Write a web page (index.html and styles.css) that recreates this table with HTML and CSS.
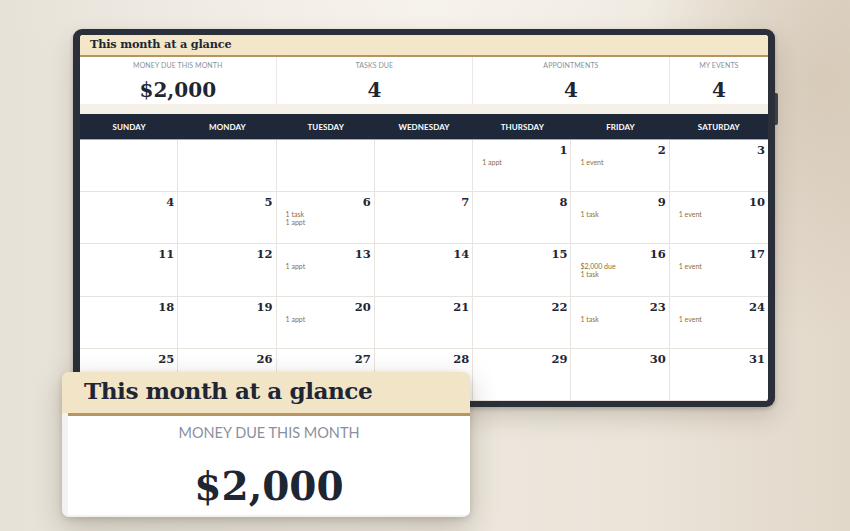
FILE: index.html
```html
<!DOCTYPE html>
<html>
<head>
<meta charset="utf-8">
<link rel="stylesheet" href="styles.css">
</head>
<body>
<div class="scene">
  <div class="device">
    <div class="screen">
      <div class="glance-head">This month at a glance</div>
      <div class="stats">
        <div class="stat wide"><div class="stat-label">MONEY DUE THIS MONTH</div><div class="stat-value">$2,000</div></div>
        <div class="stat wide"><div class="stat-label">TASKS DUE</div><div class="stat-value">4</div></div>
        <div class="stat wide"><div class="stat-label">APPOINTMENTS</div><div class="stat-value">4</div></div>
        <div class="stat"><div class="stat-label">MY EVENTS</div><div class="stat-value">4</div></div>
      </div>
      <div class="gap"></div>
      <div class="dow">
        <div>SUNDAY</div><div>MONDAY</div><div>TUESDAY</div><div>WEDNESDAY</div><div>THURSDAY</div><div>FRIDAY</div><div>SATURDAY</div>
      </div>
      <div class="grid">
        <div class="cell"></div>
        <div class="cell"></div>
        <div class="cell"></div>
        <div class="cell"></div>
        <div class="cell"><div class="num">1</div><div class="ev">1 appt</div></div>
        <div class="cell"><div class="num">2</div><div class="ev">1 event</div></div>
        <div class="cell"><div class="num">3</div></div>

        <div class="cell"><div class="num">4</div></div>
        <div class="cell"><div class="num">5</div></div>
        <div class="cell"><div class="num">6</div><div class="ev">1 task<br>1 appt</div></div>
        <div class="cell"><div class="num">7</div></div>
        <div class="cell"><div class="num">8</div></div>
        <div class="cell"><div class="num">9</div><div class="ev">1 task</div></div>
        <div class="cell"><div class="num">10</div><div class="ev">1 event</div></div>

        <div class="cell"><div class="num">11</div></div>
        <div class="cell"><div class="num">12</div></div>
        <div class="cell"><div class="num">13</div><div class="ev">1 appt</div></div>
        <div class="cell"><div class="num">14</div></div>
        <div class="cell"><div class="num">15</div></div>
        <div class="cell"><div class="num">16</div><div class="ev">$2,000 due<br>1 task</div></div>
        <div class="cell"><div class="num">17</div><div class="ev">1 event</div></div>

        <div class="cell"><div class="num">18</div></div>
        <div class="cell"><div class="num">19</div></div>
        <div class="cell"><div class="num">20</div><div class="ev">1 appt</div></div>
        <div class="cell"><div class="num">21</div></div>
        <div class="cell"><div class="num">22</div></div>
        <div class="cell"><div class="num">23</div><div class="ev">1 task</div></div>
        <div class="cell"><div class="num">24</div><div class="ev">1 event</div></div>

        <div class="cell"><div class="num">25</div></div>
        <div class="cell"><div class="num">26</div></div>
        <div class="cell"><div class="num">27</div></div>
        <div class="cell"><div class="num">28</div></div>
        <div class="cell"><div class="num">29</div></div>
        <div class="cell"><div class="num">30</div></div>
        <div class="cell"><div class="num">31</div></div>
      </div>
    </div>
    <div class="side-btn"></div>
  </div>

  <div class="zoom-card">
    <div class="zc-head">This month at a glance</div>
    <div class="zc-body">
      <div class="zc-label">MONEY DUE THIS MONTH</div>
      <div class="zc-value">$2,000</div>
    </div>
  </div>
</div>
</body>
</html>
```
FILE: styles.css
```css
* { box-sizing: border-box; }
html, body { margin: 0; padding: 0; }
body {
  width: 850px;
  height: 531px;
  overflow: hidden;
  font-family: "Lato", "Liberation Sans", sans-serif;
  background:
    radial-gradient(ellipse 180px 260px at 820px 80px, rgba(205,190,170,0.55), rgba(205,190,170,0) 100%),
    radial-gradient(ellipse 420px 160px at 430px 10px, rgba(248,244,238,0.9), rgba(248,244,238,0) 100%),
    linear-gradient(90deg, #e7e2d8 0%, #ede8df 40%, #ebe4d9 75%, #e2d8ca 100%);
}
.scene {
  position: relative;
  width: 850px;
  height: 531px;
  padding: 29px 0 0 73px;
}
.device {
  position: relative;
  width: 702px;
  height: 378px;
  background: #2a2f39;
  border-radius: 9px;
  padding: 6px 7px;
  box-shadow: 0 10px 24px rgba(60,45,25,0.18), 0 2px 4px rgba(0,0,0,0.2);
}
.side-btn {
  position: absolute;
  right: -3px;
  top: 64px;
  width: 3px;
  height: 32px;
  background: #3a3f48;
  border-radius: 0 2px 2px 0;
}
.screen {
  width: 688px;
  height: 366px;
  background: #fff;
  border-radius: 3px;
  overflow: hidden;
  display: flex;
  flex-direction: column;
}
.glance-head {
  height: 22px;
  background: #f4e6c9;
  border-bottom: 2px solid #b8955f;
  padding: 1px 0 0 10px;
  font-family: "DejaVu Serif", "Liberation Serif", serif;
  font-weight: bold;
  font-size: 11.3px;
  letter-spacing: -0.2px;
  color: #1f2633;
  line-height: 17px;
}
.stats {
  height: 47px;
  display: grid;
  grid-template-columns: 2fr 2fr 2fr 1fr;
  background: #fff;
}
.stat {
  border-right: 1px solid #ece8e1;
  display: flex;
  flex-direction: column;
  align-items: center;
  padding-top: 4px;
}
.stat:last-child { border-right: none; }
.stat-label {
  font-size: 7px;
  color: #8a8f9c;
  letter-spacing: 0.1px;
  line-height: 9px;
}
.stat-value {
  font-family: "DejaVu Serif", "Liberation Serif", serif;
  font-weight: bold;
  font-size: 20px;
  color: #1f2633;
  line-height: 22px;
  margin-top: 9px;
}
.gap {
  height: 10px;
  background: #f6f1e8;
}
.dow {
  height: 26px;
  background: #1f2838;
  border-bottom: 1px solid #c9a66f;
  display: grid;
  grid-template-columns: repeat(7, 1fr);
  align-items: center;
  color: #fff;
  font-weight: bold;
  font-size: 8px;
  text-align: center;
  letter-spacing: 0.1px;
}
.grid {
  flex: 1;
  display: grid;
  grid-template-columns: repeat(7, 1fr);
  grid-template-rows: repeat(5, 1fr);
}
.cell {
  border-right: 1px solid #e8e4dd;
  border-bottom: 1px solid #e8e4dd;
  padding: 4px 3px 0 9px;
  display: flex;
  flex-direction: column;
}
.cell:nth-child(7n) { border-right: none; }
.num {
  text-align: right;
  font-family: "DejaVu Serif", "Liberation Serif", serif;
  font-weight: bold;
  font-size: 11.5px;
  line-height: 13px;
  color: #1f2633;
}
.ev {
  font-size: 7px;
  line-height: 8px;
  color: #8a6f3f;
  margin-top: 1px;
}

.zoom-card {
  position: absolute;
  left: 62px;
  top: 372px;
  width: 408px;
  height: 145px;
  background: #f3f2f0;
  border-radius: 7px;
  overflow: hidden;
  box-shadow: 0 10px 28px rgba(60,45,25,0.25), 0 2px 6px rgba(0,0,0,0.12);
  display: flex;
  flex-direction: column;
}
.zc-head {
  height: 41px;
  background: #f2e4c6;
  padding: 2px 0 0 22px;
  font-family: "DejaVu Serif", "Liberation Serif", serif;
  font-weight: bold;
  font-size: 23.2px;
  letter-spacing: -0.5px;
  line-height: 34px;
  color: #1f2633;
}
.zc-body {
  flex: 1;
  margin: 0 0 2px 6px;
  background: #fff;
  border-top: 3px solid #b8955f;
  display: flex;
  flex-direction: column;
  align-items: center;
}
.zc-label {
  margin-top: 8px;
  font-size: 14.5px;
  line-height: 18px;
  color: #8b90a0;
}
.zc-value {
  margin-top: 22px;
  font-family: "DejaVu Serif", "Liberation Serif", serif;
  font-weight: bold;
  font-size: 39px;
  line-height: 44px;
  color: #1f2633;
}
```
